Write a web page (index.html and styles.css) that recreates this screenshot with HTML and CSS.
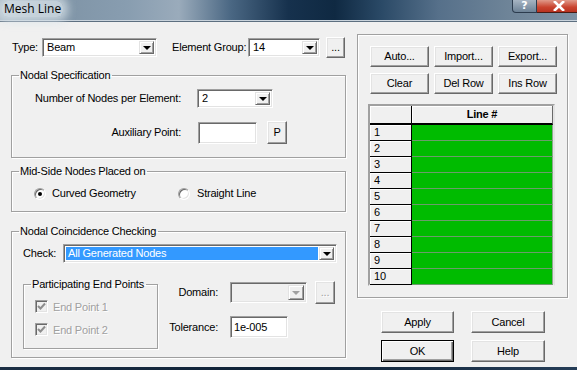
FILE: index.html
```html
<!DOCTYPE html>
<html>
<head>
<meta charset="utf-8">
<link rel="stylesheet" href="styles.css">
</head>
<body>
<div class="window">
  <div class="titlebar">
    <span class="title">Mesh Line</span>
    <div class="caption-btns">
      <span class="cap-help">?</span>
      <span class="cap-close"><svg width="14" height="10" viewBox="0 0 14 10"><path d="M2 0 L12 10 M12 0 L2 10" stroke="#fff" stroke-width="2.6"/></svg></span>
    </div>
  </div>
  <div class="client">
    <div class="left">
      <div class="top-row">
        <span class="lbl lbl-type">Type:</span>
        <div class="combo w-type"><span class="val">Beam</span><span class="drop"><i class="tri"></i></span></div>
        <span class="lbl lbl-eg">Element Group:</span>
        <div class="combo w-eg"><span class="val">14</span><span class="drop"><i class="tri"></i></span></div>
        <button class="btn btn-dots">...</button>
      </div>

      <fieldset class="group g-nodal">
        <legend>Nodal Specification</legend>
        <div class="nodal-body">
          <div class="frow">
            <span class="lbl flabel">Number of Nodes per Element:</span>
            <div class="combo w-nodes"><span class="val">2</span><span class="drop"><i class="tri"></i></span></div>
          </div>
          <div class="frow frow2">
            <span class="lbl flabel">Auxiliary Point:</span>
            <div class="edit w-aux"></div>
            <button class="btn btn-p">P</button>
          </div>
        </div>
      </fieldset>

      <fieldset class="group g-mid">
        <legend>Mid-Side Nodes Placed on</legend>
        <div class="mid-body">
          <label class="opt opt1"><span class="radio checked"></span><span>Curved Geometry</span></label>
          <label class="opt opt2"><span class="radio"></span><span>Straight Line</span></label>
        </div>
      </fieldset>

      <fieldset class="group g-coin">
        <legend>Nodal Coincidence Checking</legend>
        <div class="coin-body">
          <div class="check-row">
            <span class="lbl lbl-check">Check:</span>
            <div class="combo w-check"><span class="val sel">All Generated Nodes</span><span class="drop"><i class="tri"></i></span></div>
          </div>
          <div class="coin-lower">
            <fieldset class="group g-end">
              <legend>Participating End Points</legend>
              <div class="end-body">
                <label class="chk-item"><span class="chk"><svg width="9" height="9" viewBox="0 0 9 9"><path d="M1 4 L3.5 6.5 L8 1.5" stroke="#8d8d8d" stroke-width="2" fill="none"/></svg></span><span class="dis">End Point 1</span></label>
                <label class="chk-item chk2"><span class="chk"><svg width="9" height="9" viewBox="0 0 9 9"><path d="M1 4 L3.5 6.5 L8 1.5" stroke="#8d8d8d" stroke-width="2" fill="none"/></svg></span><span class="dis">End Point 2</span></label>
              </div>
            </fieldset>
            <div class="dt">
              <div class="dt-row">
                <span class="lbl dt-label">Domain:</span>
                <div class="combo w-domain disabled"><span class="val"></span><span class="drop"><i class="tri gray"></i></span></div>
                <button class="btn btn-dots2 disabled-btn">...</button>
              </div>
              <div class="dt-row dt-row2">
                <span class="lbl dt-label">Tolerance:</span>
                <div class="edit w-tol"><span class="val">1e-005</span></div>
              </div>
            </div>
          </div>
        </div>
      </fieldset>
    </div>

    <div class="right">
      <div class="panel">
        <div class="btn-row">
          <button class="btn w-pb">Auto...</button>
          <button class="btn w-pb">Import...</button>
          <button class="btn w-pb">Export...</button>
        </div>
        <div class="btn-row btn-row2">
          <button class="btn w-pb">Clear</button>
          <button class="btn w-pb">Del Row</button>
          <button class="btn w-pb">Ins Row</button>
        </div>
        <div class="grid">
          <div class="gh corner"></div>
          <div class="gh colh">Line #</div>
          <div class="rh">1</div><div class="gc"></div>
          <div class="rh">2</div><div class="gc"></div>
          <div class="rh">3</div><div class="gc"></div>
          <div class="rh">4</div><div class="gc"></div>
          <div class="rh">5</div><div class="gc"></div>
          <div class="rh">6</div><div class="gc"></div>
          <div class="rh">7</div><div class="gc"></div>
          <div class="rh">8</div><div class="gc"></div>
          <div class="rh">9</div><div class="gc"></div>
          <div class="rh">10</div><div class="gc"></div>
        </div>
      </div>
      <div class="dlg-btns">
        <button class="btn w-db">Apply</button>
        <button class="btn w-db">Cancel</button>
        <button class="btn w-db default">OK</button>
        <button class="btn w-db">Help</button>
      </div>
    </div>
  </div>
  <div class="bottom-frame"></div>
</div>
</body>
</html>
```

FILE: styles.css
```css
* { box-sizing: border-box; }
html, body { margin: 0; padding: 0; }
body {
  width: 577px;
  height: 370px;
  overflow: hidden;
  font-family: "Liberation Sans", Arial, sans-serif;
  font-size: 11px;
  letter-spacing: -0.2px;
  color: #000;
  background: #f0f0f0;
}
.window { width: 577px; height: 370px; display: flex; flex-direction: column; }

/* title bar */
.titlebar {
  height: 22px;
  flex: none;
  display: flex;
  align-items: flex-start;
  justify-content: space-between;
  background: linear-gradient(90deg, #a9b8c4 0%, #7f94a6 10%, #889db0 22%, #9aabbb 31%, #4a6783 40%, #16314d 50%, #0f2942 58%, #2a4966 66%, #56708a 76%, #6e8498 88%, #7d91a4 100%);
  border-bottom: 1px solid #5d6f80;
  box-shadow: inset 0 -1px 0 #c9d3dc;
}
.title {
  font-family: "Open Sans", "Noto Sans", sans-serif;
  font-size: 12px;
  letter-spacing: 0;
  line-height: 16px;
  margin: 1px 0 0 2px;
  padding: 0 2px;
  color: #000;
  background: rgba(215, 225, 232, 0.75);
  box-shadow: 0 0 8px 5px rgba(215, 225, 232, 0.75);
  border-radius: 6px;
}
.caption-btns { display: flex; margin-right: -4px; }
.cap-help {
  width: 25px; height: 13px;
  border: 1px solid #2c3c4e; border-top: none;
  border-radius: 0 0 0 4px;
  background: linear-gradient(#a6b4c2, #6d8296);
  color: #fff; font-weight: bold; font-size: 11px; line-height: 12px;
  letter-spacing: 0;
  text-align: center;
  font-family: "DejaVu Sans", sans-serif;
}
.cap-close {
  width: 44px; height: 13px;
  border: 1px solid #4a1b14; border-top: none; border-left: none;
  background: linear-gradient(#e09a8a, #c9432e 60%, #b83220);
  display: flex; align-items: center; justify-content: center;
}

/* client */
.client { flex: 1; display: flex; }
.left { width: 346px; padding-left: 11px; flex: none; }
.right { width: 211px; margin-left: 11px; flex: none; }
.bottom-frame { height: 3px; flex: none; background: linear-gradient(90deg, #1b2e44, #0d2035 50%, #253d57); }

.lbl { white-space: nowrap; line-height: 13px; }

/* common controls */
.combo {
  display: flex;
  height: 19px;
  background: #fff;
  border: 1px solid;
  border-color: #a0a0a0 #fff #fff #a0a0a0;
  box-shadow: inset 1px 1px 0 #696969, inset -1px -1px 0 #e3e3e3;
  padding: 2px;
}
.combo .val { flex: 1; padding-left: 2px; line-height: 13px; white-space: nowrap; overflow: hidden; }
.combo .val.sel { background: #3399ff; color: #fff; margin-right: 1px; }
.combo .drop {
  width: 15px;
  flex: none;
  background: #f0f0f0;
  border: 1px solid;
  border-color: #e3e3e3 #696969 #696969 #e3e3e3;
  box-shadow: inset 1px 1px 0 #fff, inset -1px -1px 0 #a0a0a0;
  display: flex; align-items: center; justify-content: center;
}
.tri { display: block; width: 0; height: 0; border-left: 4px solid transparent; border-right: 4px solid transparent; border-top: 4px solid #000; margin-top: 1px; }
.tri.gray { border-top-color: #a0a0a0; }
.combo.disabled, .combo.disabled .val { background: #f0f0f0; }

.edit {
  height: 22px;
  background: #fff;
  border: 1px solid;
  border-color: #a0a0a0 #fff #fff #a0a0a0;
  box-shadow: inset 1px 1px 0 #696969, inset -1px -1px 0 #e3e3e3;
  padding: 3px 3px;
  line-height: 14px;
}

.btn {
  font-family: "Liberation Sans", Arial, sans-serif;
  font-size: 11px;
  letter-spacing: -0.2px;
  color: #000;
  background: #f0f0f0;
  border: 1px solid;
  border-color: #fff #696969 #696969 #fff;
  box-shadow: inset -1px -1px 0 #a0a0a0, inset 1px 1px 0 #e3e3e3;
  padding: 0;
  margin: 0;
  line-height: 13px;
  text-align: center;
}
.btn.default {
  border-color: #000;
  box-shadow: inset 1px 1px 0 #fff, inset -1px -1px 0 #696969, inset -2px -2px 0 #a0a0a0;
}
.disabled-btn { color: #a0a0a0; text-shadow: 1px 1px 0 #fff; }

/* top row */
.top-row { display: flex; align-items: center; margin-top: 15px; height: 21px; }
.lbl-type { margin-left: 1px; width: 30px; }
.w-type { width: 115px; }
.lbl-eg { margin-left: 15px; width: 76px; }
.w-eg { width: 72px; }
.btn-dots { width: 19px; height: 21px; margin-left: 6px; line-height: 11px; }

/* groups */
.group {
  margin: 0;
  padding: 0;
  min-width: 0;
  border: 1px solid #a0a0a0;
  box-shadow: 1px 1px 0 #fff, inset 1px 1px 0 #fff;
}
.group legend {
  padding: 0 2px 0 1px;
  margin-left: 7px;
  line-height: 13px;
  font-size: 11px;
}
.g-nodal { margin-top: 11px; width: 335px; }
.nodal-body { padding: 7px 0 13px 0; }
.frow { display: flex; align-items: center; height: 19px; }
.frow2 { margin-top: 13px; height: 23px; }
.flabel { width: 169px; text-align: right; }
.w-nodes { width: 76px; margin-left: 16px; }
.w-aux { width: 59px; margin-left: 17px; }
.btn-p { width: 20px; height: 23px; margin-left: 10px; }

.g-mid { margin-top: 7px; width: 335px; }
.mid-body { display: flex; padding: 9px 0 11px 22px; }
.opt { display: flex; align-items: center; height: 13px; line-height: 13px; }
.opt1 { width: 144px; gap: 6px; }
.opt2 { gap: 7px; }
.radio {
  width: 12px; height: 12px;
  border-radius: 50%;
  background: #fff;
  border: 1px solid;
  border-color: #a0a0a0 #fff #fff #a0a0a0;
  box-shadow: inset 1px 1px 0 #696969, inset -1px -1px 0 #e3e3e3;
  display: flex; align-items: center; justify-content: center;
}
.radio.checked::after { content: ""; width: 4px; height: 4px; border-radius: 50%; background: #000; }

.g-coin { margin-top: 13px; width: 335px; }
.coin-body { padding: 6px 0 8px 0; }
.check-row { display: flex; align-items: center; height: 19px; }
.lbl-check { margin-left: 11px; width: 40px; }
.w-check { width: 274px; }
.coin-lower { display: flex; margin-top: 15px; }
.g-end { margin-left: 11px; width: 135px; }
.end-body { padding: 9px 0 12px 11px; }
.chk-item { display: flex; align-items: center; height: 13px; gap: 5px; }
.chk2 { margin-top: 10px; }
.chk {
  width: 13px; height: 13px;
  background: #f0f0f0;
  border: 1px solid;
  border-color: #a0a0a0 #fff #fff #a0a0a0;
  box-shadow: inset 1px 1px 0 #696969, inset -1px -1px 0 #e3e3e3;
  display: flex; align-items: center; justify-content: center;
}
.dis { color: #a0a0a0; text-shadow: 1px 1px 0 #fff; }

.dt { margin-top: 3px; }
.dt-row { display: flex; align-items: center; height: 23px; }
.dt-row2 { margin-top: 12px; height: 22px; }
.dt-label { width: 60px; text-align: right; margin-right: 12px; }
.w-domain { width: 77px; height: 21px; }
.w-domain .drop { width: 16px; }
.btn-dots2 { width: 20px; height: 23px; margin-left: 8px; line-height: 11px; }
.w-tol { width: 58px; }

/* right */
.panel {
  margin-top: 12px;
  height: 264px;
  border: 1px solid #a0a0a0;
  box-shadow: inset 1px 1px 0 #fff, 1px 1px 0 #fff;
  padding: 11px 0 0 12px;
}
.btn-row { display: flex; gap: 5px; }
.btn-row2 { margin-top: 6px; }
.w-pb { width: 59px; height: 21px; }
.grid {
  margin-top: 10px;
  margin-left: -2px;
  width: 187px;
  height: 182px;
  display: grid;
  grid-template-columns: 42px 1fr;
  grid-template-rows: 19px repeat(10, 16px);
  border: 2px solid;
  border-color: #a0a0a0 #e3e3e3 #f0f0f0 #a0a0a0;
  box-shadow: inset 1px 1px 0 #808080;
  background: #a0a0a0;
}
.gh {
  background: #f0f0f0;
  border-right: 1px solid #000;
  border-bottom: 2px solid #000;
  box-shadow: inset 1px 1px 0 #fff;
  line-height: 16px;
}
.colh { font-weight: bold; text-align: center; border-right: 1px solid #696969; }
.rh {
  background: #f0f0f0;
  border-right: 1px solid #000;
  border-bottom: 1px solid #000;
  box-shadow: inset 1px 1px 0 #fff;
  padding-left: 4px;
  line-height: 14px;
}
.gc {
  background: #00bb00;
  border-bottom: 1px solid #6b9c6b;
  border-right: 1px solid #8aa88a;
}

.dlg-btns {
  margin-top: 13px;
  margin-left: 24px;
  display: grid;
  grid-template-columns: 73px 74px;
  column-gap: 17px;
  row-gap: 7px;
}
.w-db { height: 22px; }
```
